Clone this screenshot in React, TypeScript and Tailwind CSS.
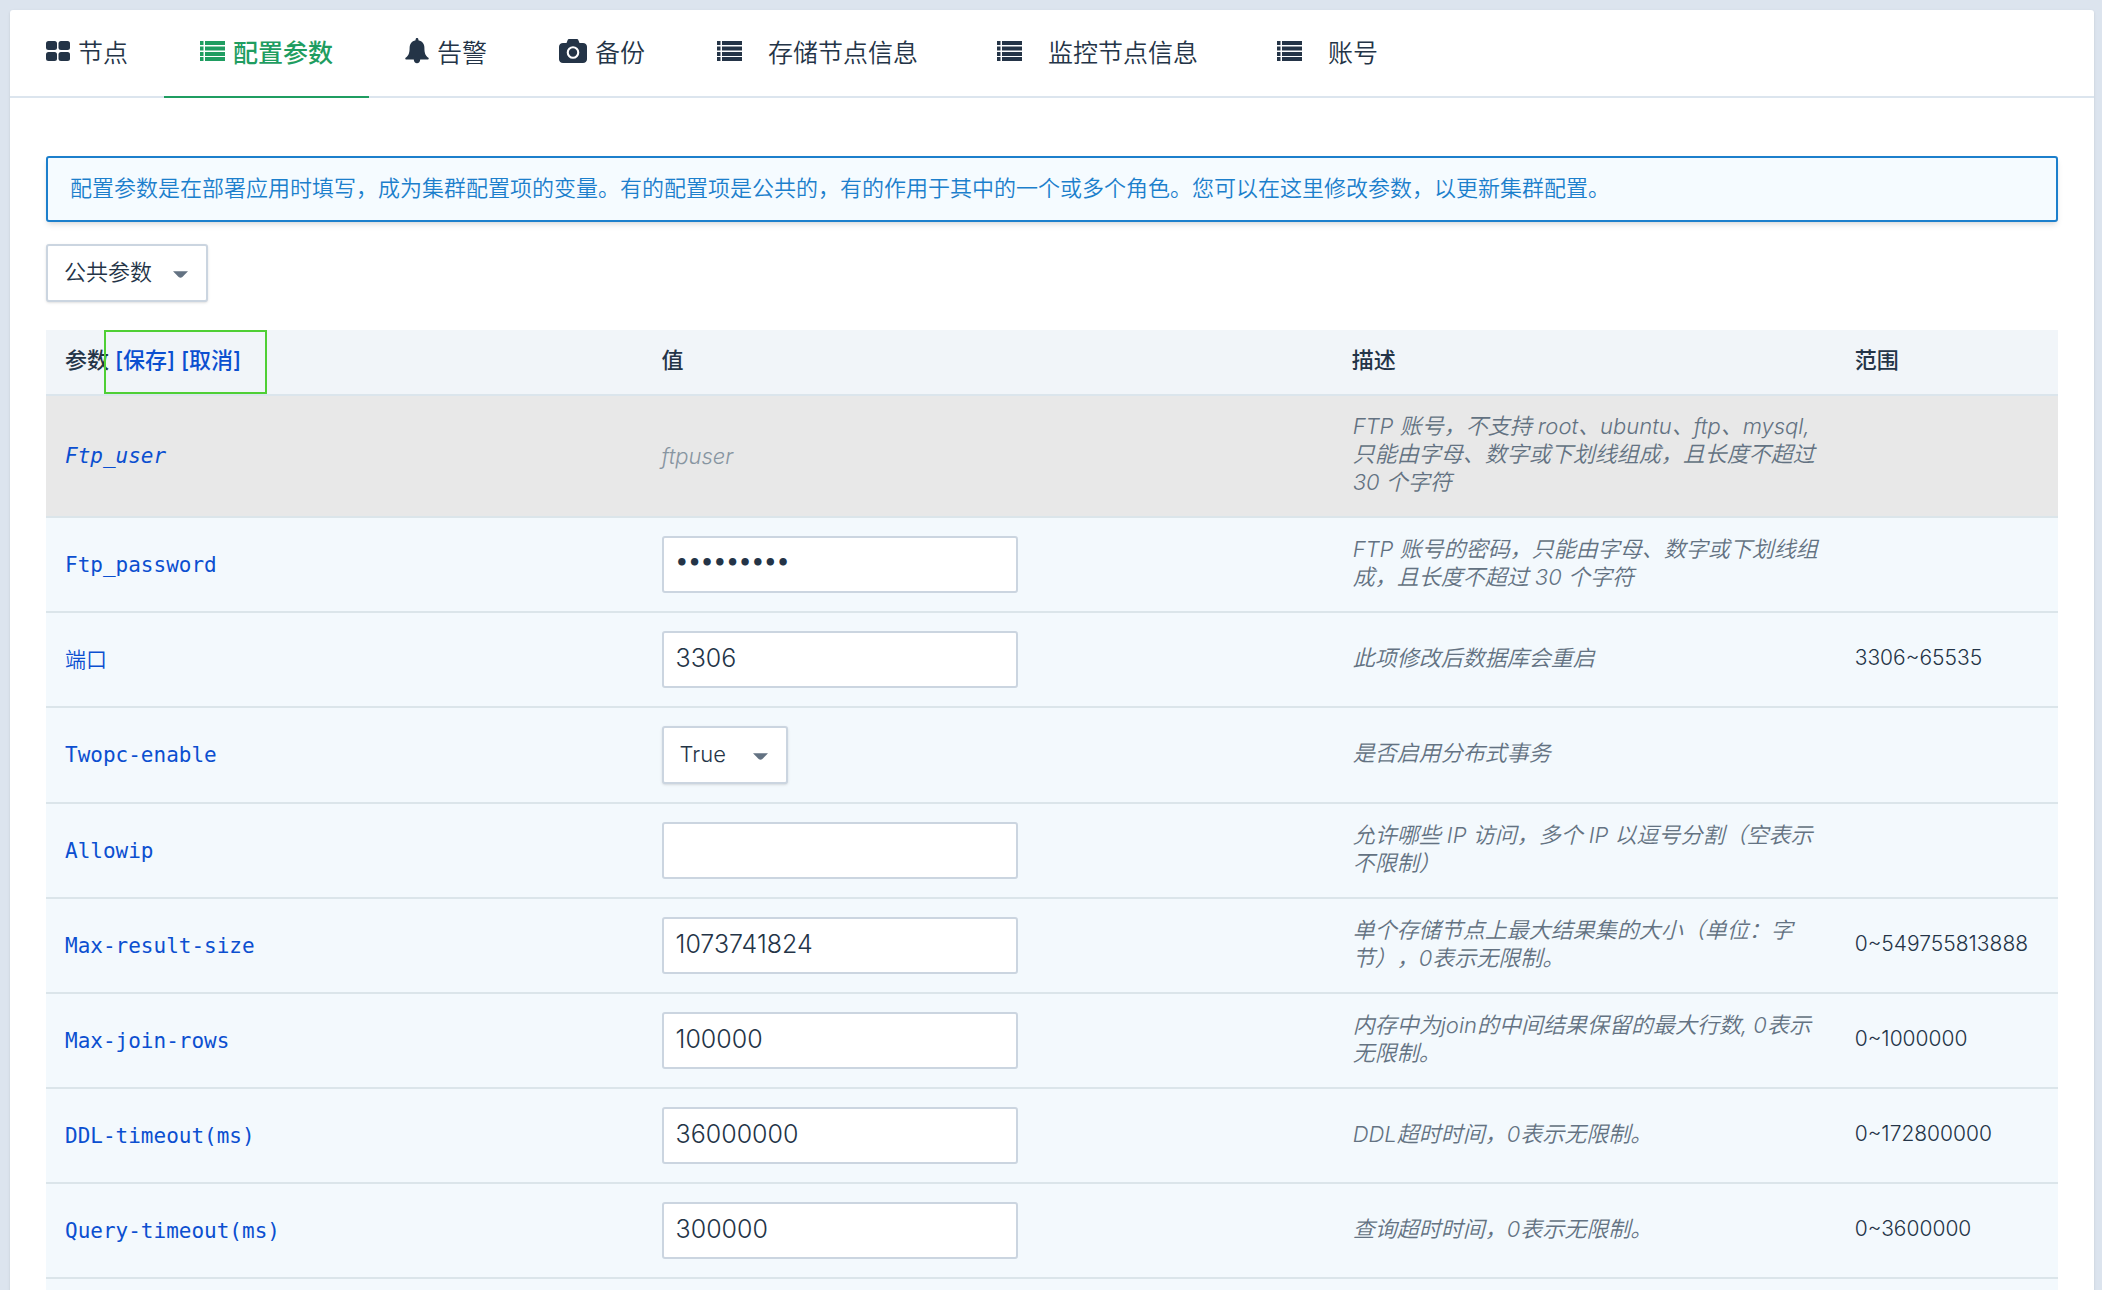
import React, { useState } from "react";

type IconName = "grid" | "list" | "bell" | "camera";

interface Tab {
  key: string;
  label: string;
  icon: IconName;
  wide?: boolean;
}

interface Param {
  name: string;
  value: string;
  desc: string;
  range?: string;
  type: "readonly" | "password" | "text" | "select";
}

const tabs: Tab[] = [
  { key: "node", label: "节点", icon: "grid" },
  { key: "config", label: "配置参数", icon: "list" },
  { key: "alarm", label: "告警", icon: "bell" },
  { key: "backup", label: "备份", icon: "camera" },
  { key: "storage", label: "存储节点信息", icon: "list", wide: true },
  { key: "monitor", label: "监控节点信息", icon: "list", wide: true },
  { key: "account", label: "账号", icon: "list", wide: true },
];

const initialParams: Param[] = [
  {
    name: "Ftp_user",
    value: "ftpuser",
    desc: "FTP 账号，不支持 root、ubuntu、ftp、mysql, 只能由字母、数字或下划线组成，且长度不超过 30 个字符",
    type: "readonly",
  },
  {
    name: "Ftp_password",
    value: "password1",
    desc: "FTP 账号的密码，只能由字母、数字或下划线组成，且长度不超过 30 个字符",
    type: "password",
  },
  { name: "端口", value: "3306", desc: "此项修改后数据库会重启", range: "3306~65535", type: "text" },
  { name: "Twopc-enable", value: "True", desc: "是否启用分布式事务", type: "select" },
  { name: "Allowip", value: "", desc: "允许哪些 IP 访问，多个 IP 以逗号分割（空表示不限制）", type: "text" },
  {
    name: "Max-result-size",
    value: "1073741824",
    desc: "单个存储节点上最大结果集的大小（单位：字节），0表示无限制。",
    range: "0~549755813888",
    type: "text",
  },
  {
    name: "Max-join-rows",
    value: "100000",
    desc: "内存中为join的中间结果保留的最大行数, 0表示无限制。",
    range: "0~1000000",
    type: "text",
  },
  { name: "DDL-timeout(ms)", value: "36000000", desc: "DDL超时时间，0表示无限制。", range: "0~172800000", type: "text" },
  { name: "Query-timeout(ms)", value: "300000", desc: "查询超时时间，0表示无限制。", range: "0~3600000", type: "text" },
];

function TabIcon({ name }: { name: IconName }) {
  if (name === "grid") {
    return (
      <svg width="24" height="20" viewBox="0 0 24 20" fill="currentColor" aria-hidden="true">
        <rect x="0" y="0" width="11" height="9" rx="2.500" />
        <rect x="12.500" y="0" width="11.500" height="9" rx="2.500" />
        <rect x="0" y="11" width="11" height="9" rx="2.500" />
        <rect x="12.500" y="11" width="11.500" height="9" rx="2.500" />
      </svg>
    );
  }
  if (name === "bell") {
    return (
      <svg width="24" height="26" viewBox="0 0 24 26" fill="currentColor" aria-hidden="true">
        <path d="M12 0c.9 0 1.400.7 1.400 1.500v.7c4 .8 6 3.700 6 7.600 0 5 .9 8 4 10 .6.400.4 1.600-.4 1.600H15.200c0 2.200-1.400 3.800-3.200 3.800s-3.200-1.600-3.200-3.800H1c-.8 0-1-1.200-.4-1.600 3.100-2 4-5 4-10 0-3.900 2-6.800 6-7.600v-.7C10.600.7 11.100 0 12 0z" />
      </svg>
    );
  }
  if (name === "camera") {
    return (
      <svg width="28" height="24" viewBox="0 0 28 24" fill="currentColor" aria-hidden="true">
        <path
          fillRule="evenodd"
          d="M10.500 0h7c.9 0 1.700.5 2 1.400l1 2.600H24c2.200 0 4 1.600 4 3.800v12.400c0 2.200-1.800 3.800-4 3.800H4c-2.200 0-4-1.600-4-3.800V7.800C0 5.600 1.800 4 4 4h3.500l1-2.600C8.800.5 9.600 0 10.500 0zM14 7.200a6.300 6.300 0 1 0 0 12.600 6.300 6.300 0 0 0 0-12.600zm0 2.100a4.200 4.200 0 1 1 0 8.400 4.200 4.200 0 0 1 0-8.400z"
        />
      </svg>
    );
  }
  return (
    <svg width="25" height="20" viewBox="0 0 25 20" fill="currentColor" aria-hidden="true">
      {[0, 5.5, 11, 16].map((y) => (
        <g key={y}>
          <rect x="0" y={y} width="3.500" height="4" />
          <rect x="5" y={y} width="20" height="4" />
        </g>
      ))}
    </svg>
  );
}

function Caret() {
  return (
    <svg
      className="pointer-events-none absolute top-[27px] right-5 text-[#637282]"
      width="15"
      height="7"
      viewBox="0 0 16 7"
      fill="currentColor"
      aria-hidden="true"
    >
      <path d="M0 0h16L10 6.200q-2 1.400-4 0z" />
    </svg>
  );
}

const selectClass =
  "h-[58px] appearance-none rounded-[3px] border-2 border-[#cbd5e0] bg-white pb-[2px] pl-4 text-[22px] text-[#243447] shadow-sm outline-none";

export default function App() {
  const [activeTab, setActiveTab] = useState("config");
  const [params, setParams] = useState(initialParams);

  const handleChange = (name: string, value: string) => {
    setParams((prev) => prev.map((param) => (param.name === name ? { ...param, value } : param)));
  };

  const handleCancel = () => {
    setParams(initialParams);
  };

  return (
    <div className="h-screen overflow-hidden bg-[#dce4ee] pt-[10px] pr-2 pl-[10px] font-[Inter,'Noto_Sans_CJK_SC',sans-serif] font-[350] text-[#243447] [text-spacing-trim:space-all]">
      <div className="min-h-full rounded-t-[3px] bg-white shadow-sm">
        <nav className="flex h-[88px] border-b-2 border-[#dce5ee]">
          {tabs.map((tab) => (
            <button
              key={tab.key}
              onClick={() => setActiveTab(tab.key)}
              className={`-mb-[2px] flex items-center border-b-2 px-9 text-[25px] leading-8 whitespace-nowrap ${
                tab.wide ? "gap-[26px] pr-[43px]" : "gap-2"
              } ${
                tab.key === activeTab
                  ? "border-[#1f9d61] font-medium text-[#1f9d61]"
                  : "border-transparent"
              }`}
            >
              <span className="flex h-[26px] items-center pb-1">
                <TabIcon name={tab.icon} />
              </span>
              <span>{tab.label}</span>
            </button>
          ))}
        </nav>

        <main className="px-9 pt-[58px]">
          <p className="rounded-[3px] border-2 border-[#1c7fcc] bg-[#f5fbff] px-[22px] pt-[14px] pb-4 text-[22px] leading-8 text-[#1c7fcc] shadow-md">
            配置参数是在部署应用时填写，成为集群配置项的变量。有的配置项是公共的，有的作用于其中的一个或多个角色。您可以在这里修改参数，以更新集群配置。
          </p>

          <div className="relative mt-[22px] w-[162px]">
            <select aria-label="参数类型" className={`w-full ${selectClass}`}>
              <option>公共参数</option>
            </select>
            <Caret />
          </div>

          <table className="mt-7 w-full table-fixed border-collapse text-left">
            <colgroup>
              <col className="w-[29.7%]" />
              <col className="w-[34.3%]" />
              <col className="w-[25%]" />
              <col className="w-[11%]" />
            </colgroup>
            <thead>
              <tr className="h-[65px] border-b-2 border-[#dbe5ec] bg-[#f1f5f9] text-[22px] leading-7">
                <th className="relative px-[19px] pb-1 font-medium">
                  参数{" "}
                  <button className="text-[#0b4fd0]">[保存]</button>{" "}
                  <button className="text-[#0b4fd0]" onClick={handleCancel}>
                    [取消]
                  </button>
                  <span className="pointer-events-none absolute inset-y-0 left-[58px] w-[163px] border-2 border-[#4fcf35]" />
                </th>
                <th className="px-[18px] pb-1 font-medium">值</th>
                <th className="px-[18px] pb-1 font-medium">描述</th>
                <th className="px-[18px] pb-1 font-medium">范围</th>
              </tr>
            </thead>
            <tbody>
              {params.map((param) => (
                <tr
                  key={param.name}
                  className={`border-b-2 border-[#dbe5ea] ${
                    param.type === "readonly" ? "bg-[#e8e8e8] italic" : "bg-[#f3f9fd]"
                  }`}
                >
                  <td className="px-[19px] font-['DejaVu_Sans_Mono','Noto_Sans_CJK_SC',monospace] text-[21px] leading-7">
                    <a href="#" className="text-[#0b4fd0]">
                      {param.name}
                    </a>
                  </td>
                  <td className="px-[18px] py-[18px]">
                    {param.type === "readonly" && (
                      <span className="text-[22px] leading-7 text-[#8795a1]">{param.value}</span>
                    )}
                    {param.type === "select" && (
                      <div className="relative w-[126px]">
                        <select
                          aria-label={param.name}
                          value={param.value}
                          onChange={(e) => handleChange(param.name, e.target.value)}
                          className={`w-full ${selectClass}`}
                        >
                          <option>True</option>
                          <option>False</option>
                        </select>
                        <Caret />
                      </div>
                    )}
                    {(param.type === "text" || param.type === "password") && (
                      <input
                        type={param.type}
                        aria-label={param.name}
                        value={param.value}
                        onChange={(e) => handleChange(param.name, e.target.value)}
                        className={`block h-[57px] w-[356px] rounded-[3px] border-2 border-[#cbd5e0] bg-white px-3 pb-1 outline-none ${
                          param.type === "password"
                            ? "font-['DejaVu_Sans_Mono',monospace] text-[21px] font-bold"
                            : "text-[25px]"
                        }`}
                      />
                    )}
                  </td>
                  <td className="pt-4 pr-3 pb-5 pl-[19px] text-[22px] leading-7 text-[#637282] italic">
                    {param.desc}
                  </td>
                  <td className="pb-1 pl-[18px] text-[21px] leading-7 whitespace-nowrap">{param.range}</td>
                </tr>
              ))}
              <tr className="h-24 bg-[#f3f9fd]">
                <td colSpan={4} />
              </tr>
            </tbody>
          </table>
        </main>
      </div>
    </div>
  );
}
